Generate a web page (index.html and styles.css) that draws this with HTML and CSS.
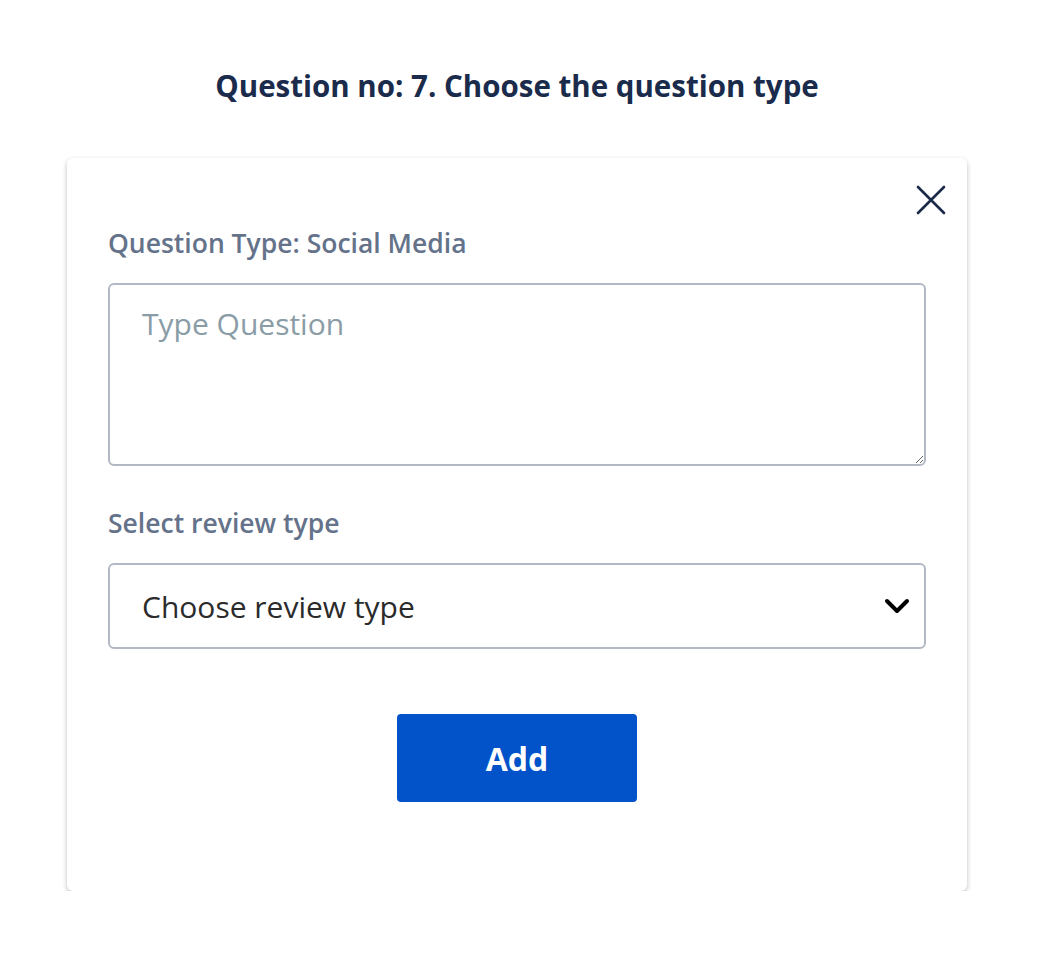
FILE: index.html
```html
<!DOCTYPE html>
<html lang="en">
<head>
<meta charset="utf-8">
<title>Question</title>
<link rel="stylesheet" href="styles.css">
</head>
<body>
<main class="page">
  <h1 class="title">Question no: 7. Choose the question type</h1>
  <section class="card">
    <button class="close" aria-label="Close">
      <svg width="30" height="30" viewBox="0 0 30 30"><path d="M2 2 L28 28 M28 2 L2 28" stroke="#1b2a4a" stroke-width="2.6" stroke-linecap="round" fill="none"/></svg>
    </button>
    <label class="label">Question Type: Social Media</label>
    <textarea class="textarea" placeholder="Type Question"></textarea>
    <label class="label label-select">Select review type</label>
    <div class="select">
      <span class="select-text">Choose review type</span>
      <svg class="chevron" width="26" height="16" viewBox="0 0 26 16"><path d="M3 3 L13 13 L23 3" stroke="#000" stroke-width="4" stroke-linecap="round" stroke-linejoin="round" fill="none"/></svg>
    </div>
    <div class="actions">
      <button class="add">Add</button>
    </div>
  </section>
</main>
</body>
</html>
```
FILE: styles.css
```css
* { box-sizing: border-box; }
html, body { margin: 0; padding: 0; background: #fff; }
body { font-family: "Open Sans", "Noto Sans", sans-serif; }
.page {
  width: 900px;
  margin-left: 67px;
  padding-top: 66px;
}
.title {
  margin: 0;
  text-align: center;
  font-size: 29.5px;
  line-height: 40px;
  font-weight: 700;
  color: #1a2b4c;
}
.card {
  position: relative;
  margin-top: 52px;
  background: #fff;
  border-radius: 6px;
  box-shadow: 0 2px 5px rgba(0,0,0,0.26);
  padding: 68px 41px 0;
  height: 733px;
}
.close {
  position: absolute;
  top: 27px;
  right: 21px;
  width: 30px;
  height: 30px;
  padding: 0;
  border: 0;
  background: none;
  display: flex;
}
.label {
  display: block;
  font-size: 26.5px;
  line-height: 34px;
  font-weight: 600;
  color: #64728a;
}
.textarea {
  display: block;
  width: 100%;
  height: 183px;
  margin-top: 23px;
  padding: 18px 32px;
  border: 2px solid #b2b9c5;
  border-radius: 6px;
  font-family: inherit;
  font-size: 30px;
  line-height: normal;
  color: #333;
  resize: vertical;
  outline: none;
}
.textarea::placeholder { color: #8a9ca6; }
.label-select { margin-top: 40px; }
.select {
  margin-top: 23px;
  height: 86px;
  border: 2px solid #b2b9c5;
  border-radius: 6px;
  display: flex;
  align-items: center;
  justify-content: space-between;
  padding: 0 14px 0 32px;
}
.select-text {
  font-size: 30px;
  color: #2b2b2b;
}
.actions {
  display: flex;
  justify-content: center;
  margin-top: 65px;
}
.add {
  width: 240px;
  height: 88px;
  border: 0;
  border-radius: 4px;
  background: #0252c9;
  color: #fff;
  font-family: inherit;
  font-size: 32px;
  font-weight: 700;
}
```
